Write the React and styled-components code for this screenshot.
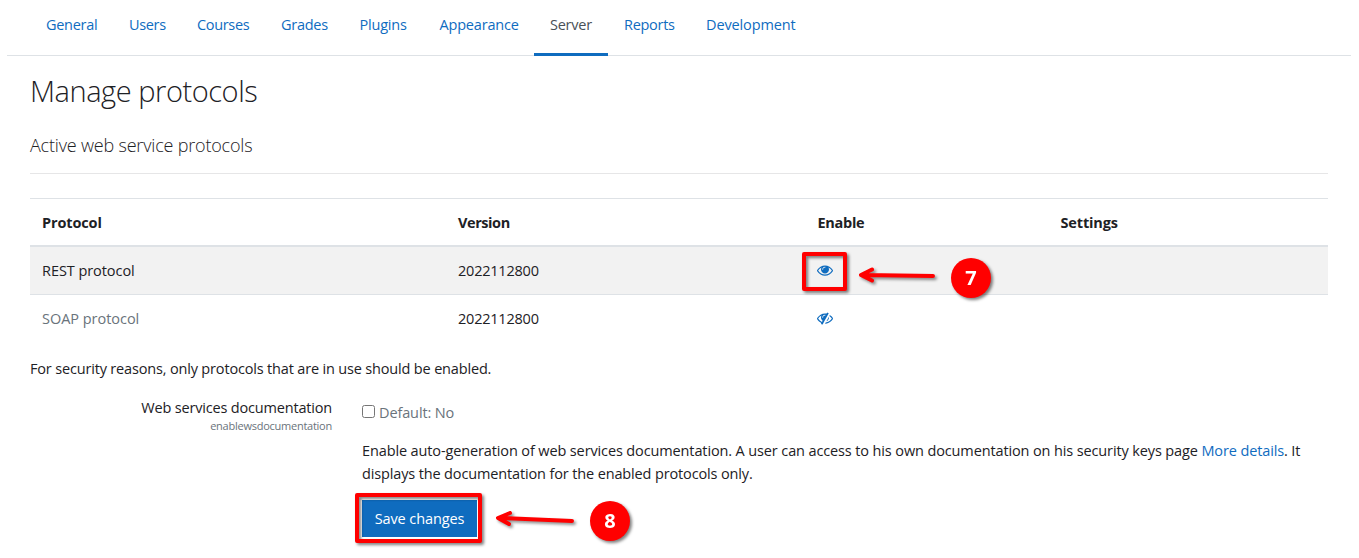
import React from "react";
import styled, { createGlobalStyle } from "styled-components";

const Global = createGlobalStyle`
  * { box-sizing: border-box; }
  body {
    margin: 0;
    background: #fff;
    color: #1d2125;
    font-family: "Open Sans", "Noto Sans", sans-serif;
    font-size: 14.5px;
    line-height: 23px;
  }
`;

const Page = styled.div`
  position: relative;
  height: 558px;
  padding: 0 8px 0 7px;
  overflow: hidden;
`;

const T = styled.span`
  letter-spacing: ${(p) => p.$ls || 0}px;
  white-space: nowrap;
`;

const Tabs = styled.nav`
  display: flex;
  height: 56px;
  padding-left: 23px;
  border-bottom: 1px solid #dee2e6;
`;

const Tab = styled.a`
  width: ${(p) => p.$w}px;
  height: 56px;
  padding: 13px 0 0 16px;
  white-space: nowrap;
  color: ${(p) => (p.$active ? "#495057" : "#0f6cbf")};
  border-bottom: 3px solid ${(p) => (p.$active ? "#0f6cbf" : "transparent")};
`;

const Content = styled.main`
  padding: 0 23px;
`;

const Title = styled.h2`
  margin: 18px 0 0;
  font-size: 29px;
  font-weight: 300;
  line-height: 34px;
`;

const Subtitle = styled.h3`
  margin: 25px 0 0;
  height: 41px;
  font-size: 18px;
  font-weight: 300;
  line-height: 24px;
  border-bottom: 1px solid #e6e6e7;
`;

const Table = styled.div`
  margin-top: 24px;
`;

const Row = styled.div`
  display: grid;
  grid-template-columns: 416px 359.5px 243px 1fr;
  height: 48px;
  padding-top: 12px;
  border-top: 1px solid #dee2e6;
  background: ${(p) => (p.$striped ? "#f2f2f2" : "#fff")};
`;

const HeadRow = styled(Row)`
  font-weight: 700;
`;

const FirstRow = styled(Row)`
  border-top-width: 2px;
  margin-top: -1px;
  height: 49px;
`;

const Cell = styled.div`
  padding-left: 12px;
  color: ${(p) => (p.$muted ? "#6a737b" : "inherit")};
`;

const Icon = styled.svg`
  display: block;
  width: 16px;
  height: 16px;
  margin: 3px 0 0 -0.5px;
  fill: #0f6cbf;
`;

const Note = styled.p`
  margin: 15px 0 0;
`;

const Setting = styled.div`
  display: flex;
  margin-top: 16px;
`;

const Label = styled.div`
  width: 302px;
  margin-right: 30px;
  text-align: right;
`;

const ShortName = styled.div`
  margin-top: -1px;
  font-size: 11px;
  line-height: 16px;
  color: #6a737b;
`;

const Field = styled.div`
  flex: 1;
`;

const CheckLine = styled.label`
  display: flex;
  align-items: center;
  gap: 4px;
  margin-top: 5px;
  color: #6a737b;
`;

const Checkbox = styled.input`
  width: 13px;
  height: 13px;
  margin: 0 0 2px;
`;

const Description = styled.p`
  margin: 15px 0 0;
`;

const Link = styled.a`
  color: #0f6cbf;
`;

const SaveButton = styled.button`
  display: block;
  width: 115px;
  height: 37px;
  margin-top: 15px;
  padding: 0;
  border: 0;
  background: #0f6cbf;
  color: #fff;
  font: inherit;
`;

const Highlight = styled.div`
  position: absolute;
  left: ${(p) => p.$x}px;
  top: ${(p) => p.$y}px;
  width: ${(p) => p.$w}px;
  height: ${(p) => p.$h}px;
  border: 4px solid #f00;
  border-radius: 2px;
  filter: drop-shadow(2px 2px 1.5px rgba(0, 0, 0, 0.5));
`;

const Arrow = styled.svg`
  position: absolute;
  left: ${(p) => p.$x}px;
  top: ${(p) => p.$y}px;
  width: 84px;
  height: 24px;
  fill: none;
  stroke: #f00;
  stroke-width: 4;
  stroke-linecap: round;
  stroke-linejoin: round;
  filter: drop-shadow(2px 2px 1.5px rgba(0, 0, 0, 0.45));
`;

const Badge = styled.div`
  position: absolute;
  left: ${(p) => p.$x}px;
  top: ${(p) => p.$y}px;
  width: 40px;
  height: 40px;
  border-radius: 50%;
  background: #f00;
  color: #fff;
  font-size: 20px;
  font-weight: 700;
  line-height: 40px;
  text-align: center;
  filter: drop-shadow(2px 2px 1.5px rgba(0, 0, 0, 0.5));
`;

const tabs = [
  ["General", 83, -0.3],
  ["Users", 68, -0.35],
  ["Courses", 84, -0.33],
  ["Grades", 78.5, -0.28],
  ["Plugins", 80, -0.2],
  ["Appearance", 110.5, -0.18],
  ["Server", 74, -0.25],
  ["Reports", 82, -0.28],
  ["Development", 122, -0.13],
];

const Eye = () => (
  <Icon viewBox="0 0 1792 1792">
    <path d="M1664 960q-152-236-381-353 61 104 61 225 0 185-131.500 316.500t-316.500 131.500-316.500-131.500-131.500-316.500q0-121 61-225-229 117-381 353 133 205 333.500 326.500t434.500 121.500 434.500-121.500 333.500-326.500zm-720-384q0-20-14-34t-34-14q-125 0-214.500 89.500t-89.500 214.500q0 20 14 34t34 14 34-14 14-34q0-86 61-147t147-61q20 0 34-14t14-34zm848 384q0 34-20 69-140 230-376.500 368.500t-499.500 138.500-499.500-139-376.500-368q-20-35-20-69t20-69q140-229 376.500-368t499.500-139 499.500 139 376.500 368q20 35 20 69z" />
  </Icon>
);

const EyeSlash = () => (
  <Icon viewBox="0 0 1792 1792">
    <path d="M555 1335l78-141q-87-63-136-159t-49-203q0-121 61-225-229 117-381 353 167 258 427 375zm389-759q0-20-14-34t-34-14q-125 0-214.500 89.500t-89.500 214.500q0 20 14 34t34 14 34-14 14-34q0-86 61-147t147-61q20 0 34-14t14-34zm363-191q0 7-1 9-106 189-316 567t-315 566l-49 89q-10 16-28 16-12 0-134-70-16-10-16-28 0-12 44-87-143-65-263.500-173t-208.500-245q-20-31-20-69t20-69q153-235 380-371t496-136q89 0 180 17l54-97q10-16 28-16 5 0 18 6t31 15.500 33 18.500 31.500 18.500 19.500 11.500q16 10 16 27zm37 447q0 139-79 253.500t-209 164.500l280-502q8 45 8 84zm448 128q0 35-20 69-39 64-109 145-150 172-347.500 267t-419.500 95l74-132q212-18 392.500-137t301.500-307q-115-179-282-294l63-112q95 64 182.500 153t144.500 182q20 34 20 69z" />
  </Icon>
);

export default function App() {
  return (
    <Page>
      <Global />
      <Tabs>
        {tabs.map(([name, w, ls]) => (
          <Tab key={name} $w={w} $active={name === "Server"}>
            <T $ls={ls}>{name}</T>
          </Tab>
        ))}
      </Tabs>
      <Content>
        <Title><T $ls={-0.45}>Manage protocols</T></Title>
        <Subtitle><T $ls={-0.19}>Active web service protocols</T></Subtitle>
        <Table>
          <HeadRow>
            <Cell><T $ls={-0.13}>Protocol</T></Cell>
            <Cell><T $ls={-0.42}>Version</T></Cell>
            <Cell><T $ls={-0.3}>Enable</T></Cell>
            <Cell><T $ls={-0.15}>Settings</T></Cell>
          </HeadRow>
          <FirstRow $striped>
            <Cell><T $ls={-0.06}>REST protocol</T></Cell>
            <Cell><T $ls={-0.22}>2022112800</T></Cell>
            <Cell><Eye /></Cell>
            <Cell />
          </FirstRow>
          <Row>
            <Cell $muted><T $ls={-0.03}>SOAP protocol</T></Cell>
            <Cell><T $ls={-0.22}>2022112800</T></Cell>
            <Cell><EyeSlash /></Cell>
            <Cell />
          </Row>
        </Table>
        <Note><T $ls={-0.17}>For security reasons, only protocols that are in use should be enabled.</T></Note>
        <Setting>
          <Label>
            <T $ls={-0.18}>Web services documentation</T>
            <ShortName><T $ls={-0.25}>enablewsdocumentation</T></ShortName>
          </Label>
          <Field>
            <CheckLine>
              <Checkbox type="checkbox" />
              <T $ls={-0.12}>Default: No</T>
            </CheckLine>
            <Description>
              <T $ls={-0.125}>
                Enable auto-generation of web services documentation. A user can access to his own documentation on his security keys page <Link>More details</Link>. It
              </T>
              <br />
              <T $ls={-0.14}>displays the documentation for the enabled protocols only.</T>
            </Description>
            <SaveButton><T $ls={-0.1}>Save changes</T></SaveButton>
          </Field>
        </Setting>
      </Content>
      <Highlight $x={802} $y={252} $w={45} $h={39} />
      <Arrow $x={856} $y={264} viewBox="0 0 84 24">
        <path d="M77 12L8 11M16 5.500L5 11l11 5.500" />
      </Arrow>
      <Badge $x={951} $y={258}>7</Badge>
      <Highlight $x={355} $y={493} $w={127} $h={50} />
      <Arrow $x={494} $y={508} viewBox="0 0 84 24">
        <path d="M78 13L8 10M16 5L4 10l11 6" />
      </Arrow>
      <Badge $x={590} $y={501}>8</Badge>
    </Page>
  );
}
